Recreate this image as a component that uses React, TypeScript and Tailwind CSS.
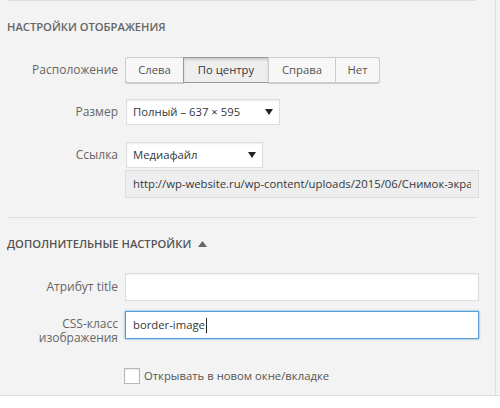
import React from "react";

function Label({ children, className = "" }: { children: React.ReactNode; className?: string }) {
  return (
    <div className={"w-[118px] shrink-0 text-right text-[12px] text-[#666] " + className}>{children}</div>
  );
}

function Caret() {
  return (
    <svg width="8" height="6" viewBox="0 0 8 6" className="shrink-0">
      <path d="M0 0 H8 L4 6 Z" fill="#222" />
    </svg>
  );
}

export default function App() {
  return (
    <div className="w-[500px] h-[408px] bg-[#f3f3f3] flex flex-col overflow-hidden font-['Open_Sans',sans-serif] text-[11.3px] text-[#32373c]">
      <div className="flex-1 min-h-0 overflow-hidden w-[496px] border-r border-[#dddddd]">
        <div className="ml-[7px] w-[469px] h-px bg-[#dddddd]" />
        <h2 className="ml-[7px] mt-[18px] text-[11.2px] leading-[16px] font-semibold uppercase text-[#666]">
          Настройки отображения
        </h2>

        <div className="mt-[22px] flex items-center">
          <Label>Расположение</Label>
          <div className="ml-[7px] flex h-[26px]">
            <div className="flex items-center w-[59px] justify-center bg-[#f7f7f7] border border-[#cccccc] rounded-l-[3px] shadow-[0_1px_0_#ccc] text-[#555]">
              Слева
            </div>
            <div className="flex items-center w-[86px] justify-center bg-[#eeeeee] border border-[#999] -ml-px shadow-[inset_0_2px_5px_-3px_rgba(0,0,0,0.5)] text-[#32373c]">
              По центру
            </div>
            <div className="flex items-center w-[68px] justify-center bg-[#f7f7f7] border border-[#cccccc] -ml-px shadow-[0_1px_0_#ccc] text-[#555]">
              Справа
            </div>
            <div className="flex items-center w-[45px] justify-center bg-[#f7f7f7] border border-[#cccccc] -ml-px rounded-r-[3px] shadow-[0_1px_0_#ccc] text-[#555]">
              Нет
            </div>
          </div>
        </div>

        <div className="mt-[16px] flex items-center">
          <Label>Размер</Label>
          <div className="ml-[8px] w-[154px] h-[26px] bg-white border border-[#dddddd] shadow-[inset_0_1px_2px_rgba(0,0,0,0.07)] flex items-center justify-between pl-[6px] pr-[6px]">
            <span>Полный – 637 × 595</span>
            <Caret />
          </div>
        </div>

        <div className="mt-[17px] flex items-center">
          <Label>Ссылка</Label>
          <div className="ml-[8px] w-[137px] h-[26px] bg-white border border-[#dddddd] shadow-[inset_0_1px_2px_rgba(0,0,0,0.07)] flex items-center justify-between pl-[6px] pr-[6px]">
            <span>Медиафайл</span>
            <Caret />
          </div>
        </div>

        <div className="mt-[2px] ml-[125px] w-[354px] h-[28px] bg-[#eeeeee] border border-[#dddddd] flex items-center px-[7px]">
          <div className="overflow-hidden whitespace-nowrap text-[#32373c]">
            http://wp-website.ru/wp-content/uploads/2015/06/Снимок-экрана-2015-06-01.png
          </div>
        </div>

        <div className="mt-[19px] ml-[7px] w-[469px] h-px bg-[#dddddd]" />

        <h2 className="ml-[7px] mt-[18px] text-[11.2px] leading-[16px] font-semibold uppercase text-[#555] flex items-center gap-[7px]">
          <span>Дополнительные настройки</span>
          <svg width="9" height="6" viewBox="0 0 9 6">
            <path d="M0 6 L4.5 0 L9 6 Z" fill="#666" />
          </svg>
        </h2>

        <div className="mt-[21px] flex items-center">
          <Label>Атрибут title</Label>
          <div className="ml-[7px] w-[354px] h-[28px] bg-white border border-[#dddddd] shadow-[inset_0_1px_2px_rgba(0,0,0,0.07)]" />
        </div>

        <div className="mt-[10px] flex items-start">
          <Label className="pt-[6px] leading-[14px]">
            <div>CSS-класс</div>
            <div>изображения</div>
          </Label>
          <div className="ml-[7px] w-[354px] h-[28px] bg-white border border-[#5b9dd9] shadow-[0_0_2px_rgba(30,140,190,0.8)] flex items-center pl-[7px]">
            <span>border-image</span>
            <span className="ml-px w-px h-[15px] bg-[#222]" />
          </div>
        </div>

        <div className="mt-[23px] ml-[124px] flex items-center gap-[4px]">
          <div className="w-[16px] h-[16px] bg-white border border-[#b4b9be] shadow-[inset_0_1px_2px_rgba(0,0,0,0.1)]" />
          <span className="text-[#555]">Открывать в новом окне/вкладке</span>
        </div>

        <div className="mt-[11px] ml-[125px] w-[354px] h-[28px] bg-white border border-[#dddddd]" />
      </div>
      <div className="h-[13px] shrink-0 bg-white border-t border-[#dddddd]" />
    </div>
  );
}
